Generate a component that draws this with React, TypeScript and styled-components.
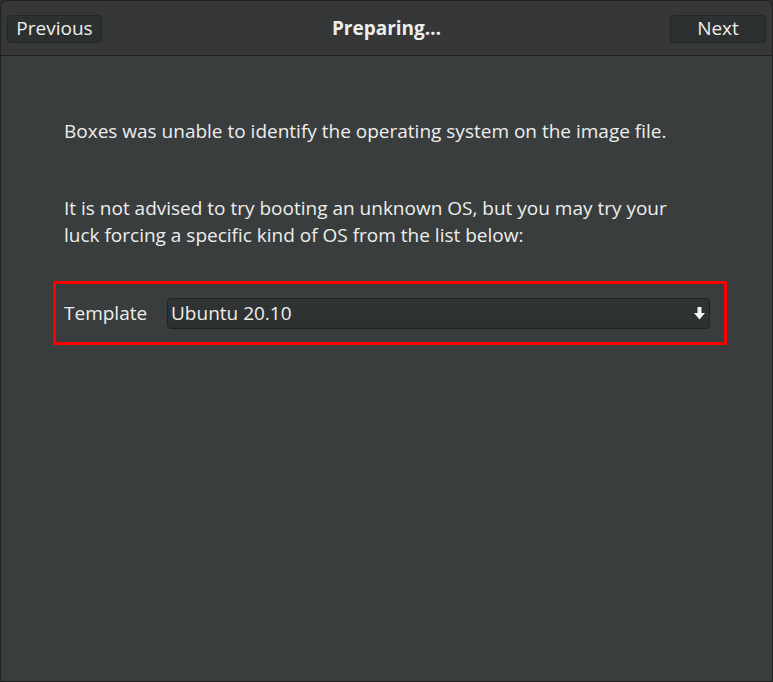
import React from "react";
import styled, { createGlobalStyle } from "styled-components";

const Global = createGlobalStyle`
  html, body { margin: 0; padding: 0; background: #2a2c2d; }
  body { font-family: "Open Sans", "Noto Sans", sans-serif; }
  * { box-sizing: border-box; }
`;

const Window = styled.div`
  width: 773px;
  height: 682px;
  display: flex;
  flex-direction: column;
  background: #393d3e;
  border: 1px solid #1f2122;
  border-radius: 8px 8px 0 0;
  overflow: hidden;
  color: #eeeeec;
`;

const HeaderBar = styled.header`
  height: 55px;
  flex: none;
  display: grid;
  grid-template-columns: 1fr auto 1fr;
  align-items: center;
  padding: 0 6px;
  background: #353739;
  border-bottom: 1px solid #1c1e1f;
`;

const NavButton = styled.button<{ $align: "start" | "end" }>`
  justify-self: ${(p) => p.$align};
  width: ${(p) => (p.$align === "start" ? 95 : 96)}px;
  height: 28px;
  margin-top: 1px;
  border: 1px solid #232526;
  border-radius: 4px;
  background: linear-gradient(#2e3132, #2c2f30);
  color: #eeeeec;
  font-family: inherit;
  font-size: 19px;
  padding: 0 0 2px;
  line-height: 24px;
`;

const Title = styled.h1`
  margin: -1px 0 0;
  font-size: 19px;
  font-weight: 700;
  color: #eeeeec;
`;

const Content = styled.main`
  flex: 1;
  display: flex;
  flex-direction: column;
  padding: 0 45px 0 52px;
`;

const Paragraph = styled.p<{ $top: number }>`
  margin: ${(p) => p.$top}px 0 0 11px;
  font-size: 19px;
  line-height: 27px;
  max-width: 630px;
`;

const Highlight = styled.div`
  margin-top: 32px;
  height: 64px;
  border: 3px solid #ff0000;
  display: flex;
  align-items: center;
  gap: 20px;
  padding: 0 14px 0 8px;
`;

const Label = styled.span`
  font-size: 19px;
  width: 83px;
  flex: none;
`;

const Select = styled.div`
  flex: 1;
  height: 31px;
  display: flex;
  align-items: center;
  justify-content: space-between;
  padding: 0 3px 0 3px;
  border: 1px solid #1f2122;
  border-radius: 4px;
  background: linear-gradient(#313435, #2d3031);
  font-size: 19px;
`;

const Arrow = () => (
  <svg width="13" height="15" viewBox="0 0 13 15" aria-hidden="true">
    <path d="M4.5 1h4v6h3.5L6.5 13.5 1 7h3.5z" fill="#f4f4f2" />
  </svg>
);

export default function App() {
  return (
    <>
      <Global />
      <Window>
        <HeaderBar>
          <NavButton $align="start">Previous</NavButton>
          <Title>Preparing…</Title>
          <NavButton $align="end">Next</NavButton>
        </HeaderBar>
        <Content>
          <Paragraph $top={62}>
            Boxes was unable to identify the operating system on the image file.
          </Paragraph>
          <Paragraph $top={50}>
            It is not advised to try booting an unknown OS, but you may try your luck forcing a
            specific kind of OS from the list below:
          </Paragraph>
          <Highlight>
            <Label>Template</Label>
            <Select>
              <span>Ubuntu 20.10</span>
              <Arrow />
            </Select>
          </Highlight>
        </Content>
      </Window>
    </>
  );
}
